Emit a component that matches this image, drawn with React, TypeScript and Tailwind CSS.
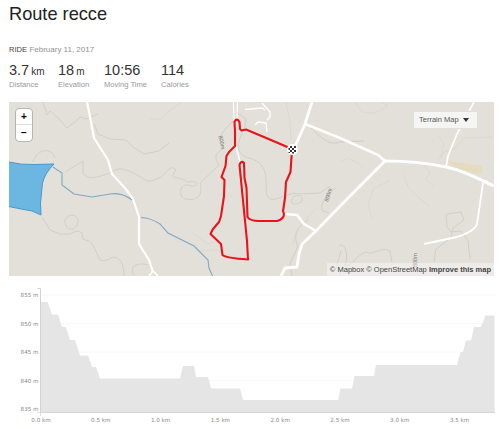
const stats = [
  { value: '3.7', unit: 'km', label: 'Distance' },
  { value: '18', unit: 'm', label: 'Elevation' },
  { value: '10:56', unit: '', label: 'Moving Time' },
  { value: '114', unit: '', label: 'Calories' },
];

const contours = [
  'M43 102 L47 115 L50 111 L58 118 L67 128 L75 122 L80 117 L86 119 L98 114',
  'M94 124 L98 134 L110 139 L126 140 L133 147 L144 154 L159 151 L169 143',
  'M33 162 C38 147 52 148 55 158 M65 172 L83 161 L83 173 C90 183 104 174 110 173 C120 164 133 172 147 181 C152 182 157 178 160 178 C168 171 171 164 176 170 C167 181 180 175 187 182 C201 180 198 187 191 186 C180 181 177 196 185 199 C202 202 202 190 200 183 L219 165 C212 153 218 154 224 147 C218 141 219 135 231 123 L239 114 L246 119 L245 127 C237 142 234 154 249 158 C272 164 264 185 267 195 C272 207 287 190 300 194 L320 193 L330 186',
  'M336 188 C330 192 318 204 323 211 L329 213',
  'M309 220 C294 227 294 240 298 246 L290 264 L292 276',
  'M65 222 C64 214 79 212 78 222 C76 233 65 230 65 222',
  'M42 217 L50 230 L60 234 L70 234 Q78 229 82 233 L83 239 Q91 241 93 245 L100 260 Q106 262 113 257 Q124 257 124 276',
  'M148 265 C137 262 129 266 134 276',
  'M292 199 C295 193 304 195 302 201 C298 205 289 206 292 199',
  'M309 126 C317 134 329 147 339 142 L364 141',
  'M339 246 C345 241 349 257 345 265 C350 269 356 255 366 252 C374 256 380 246 390 251 L392 262',
  'M447 214 L461 212 L464 220 L453 228 L451 238 L436 249 L434 262',
  'M446 214 L447 227 L451 232 L461 231 L468 241 L470 259',
  'M341 276 L337 264 L341 251',
];
const faintContours = [
  'M340 162 L348 158 L358 163 L364 169',
  'M286 102 L290 122 L291 140',
  'M404 175 L408 187 L417 196 L429 206 M390 180 L373 189 L368 205 L372 218',
  'M424 164 L430 173 L426 179 L434 187',
  'M438 159 L444 152 L454 149 L464 138 L493 137 M439 136 L444 143 L441 159',
  'M373 114 L388 106 L381 102 M355 102 L362 112 L374 113',
  'M193 233 L207 244 L214 242 M199 251 L216 250 L236 257',
  'M315 209 C308 220 294 225 293 245',
  'M150 119 L162 119 L169 111 L181 103',
];
const whiteRoads = [
  { d: 'M87 102 L91 122 L94 138 L108 160 L112 174 L125 188 L133 199 L139 217 L139 244 L149 260 L153 272', w: 2.2 },
  { d: 'M153 271 L158 276 M153 271 L149 276', w: 1.7 },
  { d: 'M312 102 L305 124 L293 151', w: 2.8 },
  { d: 'M305 124 L340 138 L378 155 L385 161', w: 2.6 },
  { d: 'M385 161 C408 161 432 164 446 167 C465 171 479 179 494 186', w: 3.2 },
  { d: 'M385 161 L346 200 L316 231 L302 244 L299 254 L297 267 L285 268 L281 276', w: 2.8 },
  { d: 'M284 214 L297 215 L304 224 L316 231', w: 2.6 },
  { d: 'M446 167 L448 156 L457 134 L474 102', w: 1.7 },
  { d: 'M483 183 L477 224 Q475 231 457 237 L424 244', w: 1.8 },
  { d: 'M233.500 102 L234 121 M237.500 102 L237 119', w: 1.3 },
  { d: 'M262 103 L270 112 L270 117 L267 120 M245 109.500 L262 108 L265 110 M255 125 L258 122 L266 123 L267 132', w: 1.3 },
  { d: 'M236 146 L240 162', w: 1.5 },
];

const elevationLabels = [
  { label: '855 m', y: 297, line: 295 },
  { label: '850 m', y: 325.5, line: 323.5 },
  { label: '845 m', y: 354, line: 352 },
  { label: '840 m', y: 382.5, line: 380.5 },
  { label: '835 m', y: 411, line: 409 },
];
const distanceLabels = ['0.0 km', '0.5 km', '1.0 km', '1.5 km', '2.0 km', '2.5 km', '3.0 km', '3.5 km'];

function RouteMap() {
  return (
    <svg className="block h-full w-full" viewBox="9 102 485 174" role="img">
      <rect x="9" y="102" width="485" height="174" fill="#e3dfd9" />
      <g fill="none" strokeWidth="0.8" strokeLinejoin="round">
        <g stroke="#cdcac4">{contours.map((d) => <path key={d} d={d} />)}</g>
        <g stroke="#d9d5cf">{faintContours.map((d) => <path key={d} d={d} />)}</g>
      </g>
      <path d="M448 161 L481 166 L483 172 L476 174 L455 168Z" fill="#e4dbb1" opacity="0.75" />
      <path d="M9 162 Q21 165 34 164.500 L54 164 Q45 173 42.500 183 L40.500 203 L41 215 Q33 210 21 209 L9 206.500Z" fill="#6cb7e2" />
      <path d="M9 162 Q21 165 34 164.500 L54 164 Q45 173 42.500 183 L40.500 203 L41 215 Q33 210 21 209 L9 206.500" fill="none" stroke="#4698cd" strokeWidth="1" />
      <path d="M53 167 L62 173 L62 185 L74 194 L92 197 L110 194 Q122 192 132 200 M141 217.500 Q151 218 160 224 L168 233 L188 243 L194 246 L208 260 L209 268 L212.500 276" fill="none" stroke="#7fa9c6" strokeWidth="1.1" />
      <g fill="none" stroke="#fff" strokeLinejoin="round">
        {whiteRoads.map((road) => <path key={road.d} d={road.d} strokeWidth={road.w} />)}
      </g>
      <g fill="#77736e" fontFamily="Liberation Sans, sans-serif" fontSize="5.5">
        <text transform="translate(218.500 136) rotate(78)">800m</text>
        <text transform="translate(328 202) rotate(-73)">800m</text>
        <text transform="translate(417 267) rotate(-90)">800m</text>
      </g>
      <path d="M292 149 L271 140 L246 129.500 L241.500 130.500 L240 129 L239.500 122 Q237 117.500 234.500 121.500 L235 132 L235 146 L229 152 L226.500 156 L225.500 166 L221.500 177 L224.500 180 L224 196 L221 216 L219 222 L213 229 L210.500 234 L221 244 L222.500 255 Q226 258 248 259.500 L247 241 L239.500 165 Q241 160 244 163 L244.500 178 L246.500 188 L247.500 217 Q250 221 259 221 L277 221 Q284 219 284 214 L283 211 L285 198 L286 182 L290.500 172 L292 149" fill="none" stroke="#ea1319" strokeWidth="2.100" strokeLinejoin="round" />
      <circle cx="292.500" cy="149.500" r="5.500" fill="#fff" />
      <path d="M290 146h2v2h-2zM294 146h2v2h-2zM288.500 148h1.500v2h-1.500zM292 148h2v2h-2zM290 150h2v2h-2zM294 150h2v2h-2zM292 152h2v1.500h-2zM288.500 152h1.500v1h-1.500z" fill="#333" />
    </svg>
  );
}

function ElevationChart() {
  return (
    <svg className="block h-[153px] w-[500px]" viewBox="0 276 500 153" role="img">
      {elevationLabels.map(({ label, line }) => (
        <path key={label} d={`M41 ${line}H495`} stroke="#f8f8f8" strokeWidth="1" />
      ))}
      <path d="M40 302H47.500L52 314.500H58L62 327H66L70 340H75L80 355.500H88L92 367H96L100 378.500H180L183 366H194L196 377H208L211 388.500H240L243 400H338L340.500 388.500H352L354.500 376H374L376 365H457L460.500 352H463L466 340.500H471L474 327H481L485.500 315.500H494.500V413H40Z" fill="#e5e5e5" />
      <path d="M41 409H495" stroke="#e2e2e2" strokeWidth="0.800" />
      <path d="M37.500 288.500H40.500V413" fill="none" stroke="#d2d2d2" />
      <path d="M40.500 412.500H495" stroke="#d5d5d5" />
      <path d="M37 412.500H40M40.500 413V416" stroke="#d4d4d4" strokeWidth="0.700" />
      <g fill="#888" fontFamily="DejaVu Sans, sans-serif" fontSize="5.6">
        {elevationLabels.map(({ label, y }) => (
          <text key={label} x="38.5" y={y} textAnchor="end">{label}</text>
        ))}
        {distanceLabels.map((label, index) => (
          <text key={label} x={41 + index * 59.8} y="422.3" textAnchor="middle">{label}</text>
        ))}
      </g>
    </svg>
  );
}

export default function App() {
  return (
    <main className="h-[429px] w-[500px] overflow-hidden bg-white font-['Liberation_Sans',sans-serif] text-[#333]">
      <header className="h-[102px] pl-[9px] pt-1">
        <h1 className="h-10 text-[18.2px] leading-[21px] text-[#222]">Route recce</h1>
        <p className="h-[17px] whitespace-nowrap text-[8px] leading-[11px] text-[#929292]">
          <span className="text-[7.6px] text-[#444]">RIDE</span> February 11, 2017
        </p>
        <dl className="grid grid-cols-[49px_46px_57px_50px]">
          {stats.map(({ value, unit, label }) => (
            <div key={label} className="flex flex-col-reverse whitespace-nowrap">
              <dt className="text-[7.6px] leading-[10px] text-[#999]">{label}</dt>
              <dd className="h-[19px] pt-px text-[14.5px] leading-[17px]">
                {value}{unit && <span className="ml-0.5 text-[10px]">{unit}</span>}
              </dd>
            </div>
          ))}
        </dl>
      </header>
      <section className="relative ml-[9px] h-[174px] w-[485px] overflow-hidden">
        <RouteMap />
        <div className="absolute left-[6px] top-[6px] flex h-[34px] w-[18px] flex-col rounded-sm border border-[#b7b4b0] bg-white text-center text-[10px] font-bold leading-4 text-black">
          <button className="h-4 border-b border-[#ddd]">+</button>
          <button className="h-4">−</button>
        </div>
        <button className="absolute right-[16px] top-[9px] flex h-[18px] w-[65px] items-center border border-[#e0e0e0] bg-[#f5f5f4] pl-[5px] text-[7.5px] text-[#555]">
          <span className="w-[44px] whitespace-nowrap text-left">Terrain Map</span>
          <span className="border-x-[3px] border-t-[4px] border-x-transparent border-t-[#333]" />
        </button>
        <p className="absolute bottom-0 right-0 h-[13px] whitespace-nowrap bg-white/40 px-[3px] text-[7.5px] leading-[13px] text-[#444]">
          © Mapbox © OpenStreetMap <strong>Improve this map</strong>
        </p>
      </section>
      <ElevationChart />
    </main>
  );
}
